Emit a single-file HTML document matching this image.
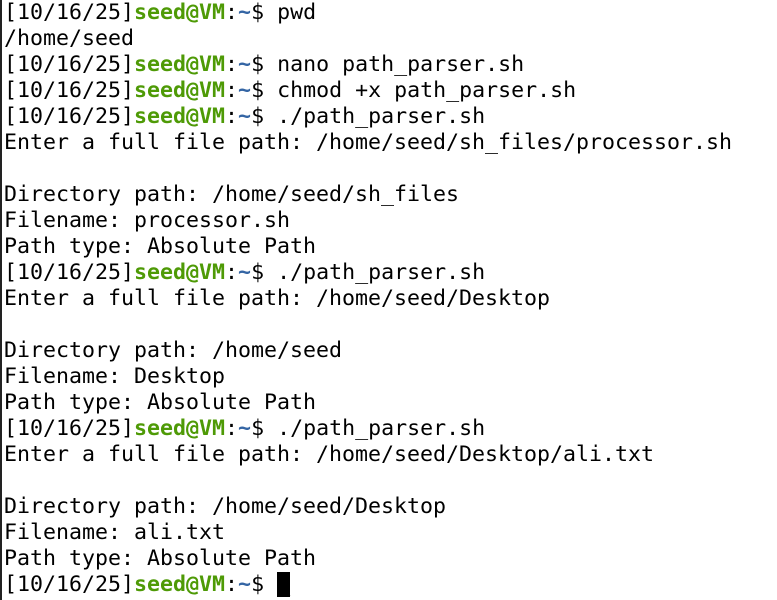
<html><head><style>
body{margin:0;background:#fff;width:777px;height:600px;overflow:hidden;border-left:2px solid #222;box-sizing:border-box}
pre{margin:0;position:absolute;left:4px;top:0px;font-family:"DejaVu Sans Mono","Liberation Mono",monospace;font-size:21.6px;line-height:26px;color:#000}
.g{color:#4e9a06;font-weight:bold}.b{color:#3465a4;font-weight:bold}
.c{background:#000;color:#000}
</style></head><body><pre>[10/16/25]<span class="g">seed@VM</span>:<span class="b">~</span>$ pwd
/home/seed
[10/16/25]<span class="g">seed@VM</span>:<span class="b">~</span>$ nano path_parser.sh
[10/16/25]<span class="g">seed@VM</span>:<span class="b">~</span>$ chmod +x path_parser.sh
[10/16/25]<span class="g">seed@VM</span>:<span class="b">~</span>$ ./path_parser.sh
Enter a full file path: /home/seed/sh_files/processor.sh

Directory path: /home/seed/sh_files
Filename: processor.sh
Path type: Absolute Path
[10/16/25]<span class="g">seed@VM</span>:<span class="b">~</span>$ ./path_parser.sh
Enter a full file path: /home/seed/Desktop

Directory path: /home/seed
Filename: Desktop
Path type: Absolute Path
[10/16/25]<span class="g">seed@VM</span>:<span class="b">~</span>$ ./path_parser.sh
Enter a full file path: /home/seed/Desktop/ali.txt

Directory path: /home/seed/Desktop
Filename: ali.txt
Path type: Absolute Path
[10/16/25]<span class="g">seed@VM</span>:<span class="b">~</span>$ <span class="c">_</span></pre></body></html>
